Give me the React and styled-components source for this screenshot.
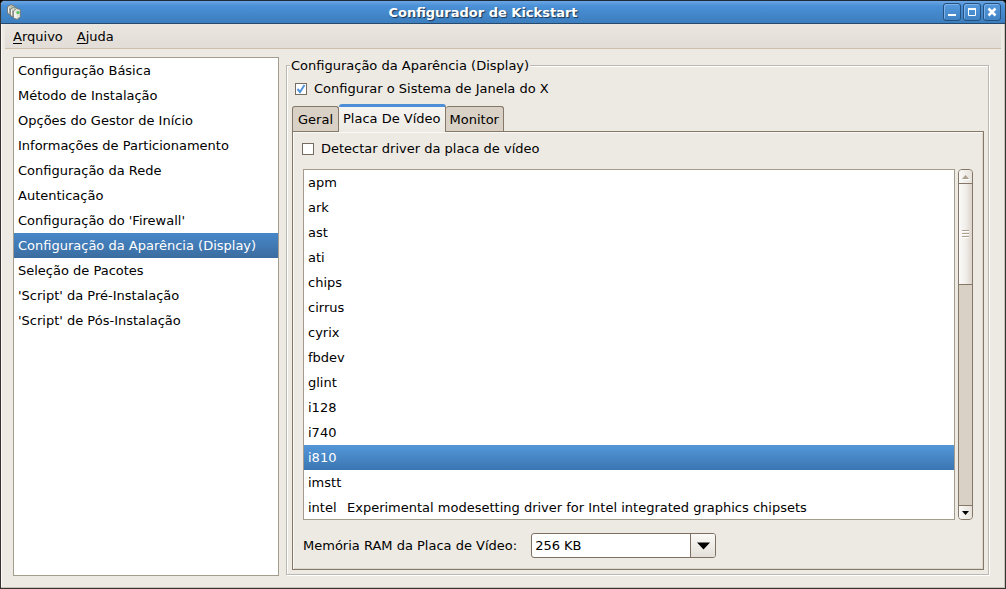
import React, { useState } from "react";
import styled, { createGlobalStyle, css } from "styled-components";

const sections = [
  "Configuração Básica",
  "Método de Instalação",
  "Opções do Gestor de Início",
  "Informações de Particionamento",
  "Configuração da Rede",
  "Autenticação",
  "Configuração do 'Firewall'",
  "Configuração da Aparência (Display)",
  "Seleção de Pacotes",
  "'Script' da Pré-Instalação",
  "'Script' de Pós-Instalação",
];

const drivers = [
  { name: "apm" },
  { name: "ark" },
  { name: "ast" },
  { name: "ati" },
  { name: "chips" },
  { name: "cirrus" },
  { name: "cyrix" },
  { name: "fbdev" },
  { name: "glint" },
  { name: "i128" },
  { name: "i740" },
  { name: "i810" },
  { name: "imstt" },
  {
    name: "intel",
    description:
      "Experimental modesetting driver for Intel integrated graphics chipsets",
  },
];

const tabs = ["Geral", "Placa De Vídeo", "Monitor"];

const Check = ({ id, label, checked, onChange }) => (
  <CheckRow>
    <CheckBox>
      <input
        id={id}
        type="checkbox"
        checked={checked}
        onChange={(e) => onChange(e.target.checked)}
      />
      {checked && (
        <svg width="12" height="12" viewBox="0 0 12 12" aria-hidden="true">
          <path
            d="M2.5 6 L5 9 L9.5 2"
            fill="none"
            stroke="#5294dc"
            strokeWidth="2"
          />
        </svg>
      )}
    </CheckBox>
    <label htmlFor={id}>{label}</label>
  </CheckRow>
);

const App = () => {
  const [section, setSection] = useState(7);
  const [driver, setDriver] = useState("i810");
  const [tab, setTab] = useState(1);
  const [useX, setUseX] = useState(true);
  const [probe, setProbe] = useState(false);

  return (
    <>
      <GlobalStyle />
      <Window>
        <TitleBar>
          <AppIcon viewBox="0 0 14 16" aria-hidden="true">
            <g stroke="#6d6f69" strokeWidth="0.8">
              <path d="M.6 2.5 L4 .6 L7.5 2 V9.5 L4 11 L.6 9.5z" fill="#c9cac0" />
              <path d="M3.4 5 L7 3 L10.5 4 V11.5 L7 13 L3.4 12z" fill="#d3d4ca" />
              <path d="M6.4 7 L9.5 4.5 L13.4 5.5 V13 L10 15.4 L6.4 14z" fill="#e2e3da" />
            </g>
            <path
              d="M1.6 3.6 V8.6 M4.6 6 V11 M7.6 8 V13.4 M9 8.6 V14"
              fill="none"
              stroke="#fafaf6"
            />
            <path
              d="M2.6 4 V9 M5.6 6.5 V12"
              fill="none"
              stroke="#8d8f86"
              strokeWidth="0.7"
            />
            <circle cx="11" cy="8.6" r="1.7" fill="#5fc465" />
            <path d="M4 2.4 L5.6 3.4 M7.4 4.6 L8.6 5.4" stroke="#7fb681" />
          </AppIcon>
          <Title>Configurador de Kickstart</Title>
          <WindowButtons>
            <WindowButton aria-label="Minimizar">
              <svg width="16" height="16" viewBox="0 0 16 16">
                <path d="M4 11 H12" stroke="#fff" strokeWidth="2" />
              </svg>
            </WindowButton>
            <WindowButton aria-label="Maximizar">
              <svg width="16" height="16" viewBox="0 0 16 16">
                <path
                  d="M4.5 4 V11.5 H11.5 V4"
                  fill="none"
                  stroke="#fff"
                />
                <path d="M4 5 H12" stroke="#fff" strokeWidth="2" />
              </svg>
            </WindowButton>
            <WindowButton aria-label="Fechar">
              <svg width="16" height="16" viewBox="0 0 16 16">
                <path
                  d="M4.5 4.5 L11.5 11.5 M11.5 4.5 L4.5 11.5"
                  stroke="#fff"
                  strokeWidth="2.6"
                />
              </svg>
            </WindowButton>
          </WindowButtons>
        </TitleBar>

        <MenuBar>
          <MenuItem>
            <u>A</u>rquivo
          </MenuItem>
          <MenuItem>
            <u>A</u>juda
          </MenuItem>
        </MenuBar>

        <Body>
          <SectionList>
            {sections.map((name, index) => (
              <li key={name}>
                <SectionButton
                  $selected={index === section}
                  onClick={() => setSection(index)}
                >
                  {name}
                </SectionButton>
              </li>
            ))}
          </SectionList>

          <Frame>
            <legend>Configuração da Aparência (Display)</legend>
            <Check
              id="use-x"
              label="Configurar o Sistema de Janela do X"
              checked={useX}
              onChange={setUseX}
            />
            <TabBar role="tablist">
              {tabs.map((name, index) => (
                <Tab
                  key={name}
                  role="tab"
                  aria-selected={index === tab}
                  $active={index === tab}
                  onClick={() => setTab(index)}
                >
                  {name}
                </Tab>
              ))}
            </TabBar>
            <Panel role="tabpanel">
              <Check
                id="probe"
                label="Detectar driver da placa de vídeo"
                checked={probe}
                onChange={setProbe}
              />
              <DriverArea>
                <DriverList>
                  <DriverTable>
                    <tbody>
                      {drivers.map(({ name, description }) => (
                        <DriverRow
                          key={name}
                          $selected={name === driver}
                          onClick={() => setDriver(name)}
                        >
                          <td>{name}</td>
                          <td>{description}</td>
                        </DriverRow>
                      ))}
                    </tbody>
                  </DriverTable>
                </DriverList>
                <ScrollBar>
                  <ScrollArrow aria-label="Subir">
                    <svg width="9" height="6" viewBox="0 0 9 6">
                      <path d="M2 5.5 H9" stroke="#fff" />
                      <path d="M1 5 L4.5 1 L8 5z" fill="#ada08e" />
                    </svg>
                  </ScrollArrow>
                  <ScrollThumb>
                    <i />
                    <i />
                    <i />
                  </ScrollThumb>
                  <ScrollTrough />
                  <ScrollArrow aria-label="Descer">
                    <svg width="9" height="6" viewBox="0 0 9 6">
                      <path d="M1 1 H8 L4.5 5z" fill="#000" />
                    </svg>
                  </ScrollArrow>
                </ScrollBar>
              </DriverArea>
              <MemoryRow>
                <label htmlFor="ram">Memória RAM da Placa de Vídeo:</label>
                <Combo>
                  <select id="ram" defaultValue="256 KB">
                    <option>256 KB</option>
                    <option>512 KB</option>
                    <option>1 MB</option>
                    <option>2 MB</option>
                    <option>4 MB</option>
                    <option>8 MB</option>
                  </select>
                  <ComboArrow>
                    <svg width="13" height="8" viewBox="0 0 13 8">
                      <path d="M0 0.5 H13 L6.5 7.5z" fill="#000" />
                    </svg>
                  </ComboArrow>
                </Combo>
              </MemoryRow>
            </Panel>
          </Frame>
        </Body>
      </Window>
    </>
  );
};

const GlobalStyle = createGlobalStyle`
  * {
    box-sizing: border-box;
  }

  body {
    margin: 0;
    background: #000;
    color: #000;
    font: 13px/16px "DejaVu Sans", sans-serif;
  }

  button,
  select {
    margin: 0;
    color: inherit;
    font: inherit;
  }
`;

const Window = styled.div`
  display: flex;
  flex-direction: column;
  height: 100vh;
  border: 1px solid #35322f;
  border-top-color: #1d2a3a;
  border-radius: 5px 5px 0 0;
  background: #edeae3;
  box-shadow: inset -1px -1px 0 #c9c3b9, inset 1px 0 0 #fbfaf8;
  overflow: hidden;
`;

const TitleBar = styled.header`
  display: grid;
  grid-template-columns: 22px 1fr 64px;
  align-items: center;
  height: 23px;
  padding: 0 4px 0 6px;
  border-bottom: 1px solid #27496d;
  background: linear-gradient(#6ba6e4, #4a90d6 5px, #3c7ebe);
`;

const AppIcon = styled.svg`
  width: 14px;
  height: 16px;
`;

const Title = styled.h1`
  margin: 0;
  padding-top: 1px;
  color: #fff;
  font-size: 13px;
  text-align: center;
  text-shadow: 1px 1px 1px #1b3350;
`;

const WindowButtons = styled.div`
  display: flex;
  justify-content: flex-end;
  gap: 2px;
`;

const WindowButton = styled.button`
  display: grid;
  place-items: center;
  width: 18px;
  height: 18px;
  padding: 0;
  border: 1px solid #26517f;
  border-radius: 3px;
  background: linear-gradient(#5699dd, #3f82c4);
  box-shadow: inset 1px 1px 0 #7db2ea;
`;

const MenuBar = styled.nav`
  display: flex;
  height: 25px;
  margin: 0 4px;
  border-bottom: 1px solid #cdbfac;
  background: linear-gradient(#eae6e0, #e2ddd6);
`;

const MenuItem = styled.button`
  padding: 2px 6px 0 8px;
  border: 0;
  background: none;

  u {
    text-underline-offset: 2px;
  }
`;

const Body = styled.main`
  display: grid;
  grid-template-columns: 266px 1fr;
  gap: 7px;
  flex: 1;
  min-height: 0;
  padding: 8px 16px 12px 12px;
`;

const SectionList = styled.ul`
  margin: 0;
  padding: 0;
  border: 1px solid #a49c8d;
  background: #fff;
  list-style: none;
`;

const SectionButton = styled.button`
  display: block;
  width: 100%;
  height: 25px;
  padding: 0 4px;
  border: 0;
  background: none;
  text-align: left;
  ${({ $selected }) =>
    $selected &&
    css`
      color: #fff;
      background: linear-gradient(#4788c9, #3b6c9f);
    `}
`;

const Frame = styled.fieldset`
  display: flex;
  flex-direction: column;
  min-width: 0;
  min-height: 0;
  margin: 0 0 1px;
  padding: 2px 4px 4px 5px;
  border: 1px solid #bbb8b2;
  box-shadow: 1px 1px 0 #fff, inset 1px 1px 0 #fff;

  > legend {
    margin-left: -2px;
    padding: 1px 1px 0;
    background: #edeae3;
  }
`;

const CheckRow = styled.div`
  display: flex;
  align-items: center;
  gap: 7px;
  height: 25px;
  padding: 0 3px;
`;

const CheckBox = styled.span`
  position: relative;
  display: flex;

  input {
    width: 12px;
    height: 12px;
    margin: 0;
    border: 1px solid #766d60;
    background: #fff;
    appearance: none;
  }

  svg {
    position: absolute;
    inset: 0;
    pointer-events: none;
  }
`;

const TabBar = styled.div`
  display: flex;
  align-items: flex-end;
  height: 27px;
  margin-top: 3px;
`;

const Tab = styled.button`
  position: relative;
  height: 25px;
  padding: 2px 5px 0;
  border: 1px solid #857868;
  border-bottom: 0;
  border-radius: 3px 3px 0 0;
  background: #d9d1c5;

  & + & {
    padding-left: 4px;
    padding-right: 4px;
    border-left: 0;
  }

  ${({ $active }) =>
    $active &&
    css`
      height: 28px;
      margin-bottom: -1px;
      padding-top: 0;
      padding-bottom: 2px;
      border-top: 3px solid #4d8fd6;
      background: linear-gradient(#f6f5f2, #edeae3);
    `}
`;

const Panel = styled.div`
  display: flex;
  flex: 1;
  flex-direction: column;
  min-height: 0;
  padding: 4px 6px 11px;
  border: 1px solid #857868;
  box-shadow: inset 1px 1px 0 #f9f8f6, inset -1px -1px 0 #dcd7ce;
`;

const DriverArea = styled.div`
  display: flex;
  flex: 1;
  gap: 3px;
  min-height: 0;
  margin-top: 8px;
  padding: 0 4px;
`;

const DriverList = styled.div`
  flex: 1;
  border: 1px solid #a49c8d;
  background: #fff;
  overflow: hidden;
`;

const DriverTable = styled.table`
  width: 100%;
  border-collapse: collapse;
  table-layout: fixed;

  td {
    height: 25px;
    padding: 0;
    white-space: nowrap;
  }

  td:first-child {
    width: 43px;
    padding-left: 4px;
  }
`;

const DriverRow = styled.tr`
  ${({ $selected }) =>
    $selected &&
    css`
      color: #fff;
      background: linear-gradient(#5397d9, #3b76b2);
    `}
`;

const ScrollBar = styled.div`
  display: flex;
  flex-direction: column;
  width: 15px;
  border: 1px solid #857868;
  border-radius: 4px;
  background: #d9d1c5;
  overflow: hidden;
`;

const ScrollArrow = styled.button`
  display: grid;
  place-items: center;
  height: 13px;
  padding: 0;
  border: 0;
  background: linear-gradient(90deg, #fbfaf9, #e6e1da);
`;

const ScrollThumb = styled.div`
  display: flex;
  flex-direction: column;
  align-items: center;
  justify-content: center;
  gap: 1px;
  height: 102px;
  border: solid #857868;
  border-width: 1px 0;
  background: linear-gradient(90deg, #fbfaf9, #f1eeea 50%, #dcd5cc);

  i {
    width: 7px;
    height: 2px;
    border-top: 1px solid #ada08e;
    background: #fff;
  }
`;

const ScrollTrough = styled.div`
  flex: 1;
  border-bottom: 1px solid #857868;
`;

const MemoryRow = styled.div`
  display: flex;
  align-items: center;
  gap: 14px;
  margin-top: 13px;
  padding: 0 4px;
`;

const Combo = styled.div`
  position: relative;
  display: flex;

  select {
    width: 185px;
    height: 25px;
    padding: 0 28px 0 3px;
    border: 1px solid #7b7062;
    border-radius: 3px;
    background: #fff;
    appearance: none;
  }
`;

const ComboArrow = styled.span`
  position: absolute;
  inset: 1px 1px 1px auto;
  display: grid;
  place-items: center;
  width: 25px;
  border-left: 1px solid #7b7062;
  border-radius: 0 2px 2px 0;
  background: linear-gradient(#fbfaf8, #e4dfd8);
  pointer-events: none;
`;

export default App;
